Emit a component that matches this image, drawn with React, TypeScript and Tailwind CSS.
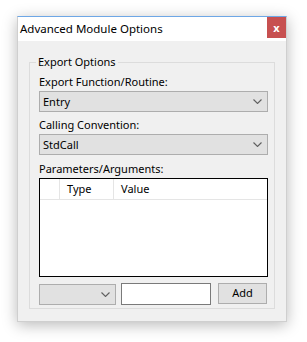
import React from "react";

const font = { fontFamily: '"Noto Sans", "Open Sans", sans-serif' };

function Chevron() {
  return (
    <svg width="9" height="5" viewBox="0 0 9 5" className="shrink-0">
      <path d="M0.5 0.5 L4.5 4.5 L8.5 0.5" fill="none" stroke="#5f5f5f" strokeWidth="1.1" />
    </svg>
  );
}

function Combo({ value, className }: { value: string; className: string }) {
  return (
    <div
      className={`flex items-center justify-between h-[21px] bg-[#e1e1e1] border border-[#adadad] pl-[3px] pr-[5px] text-[11px] text-black ${className}`}
    >
      <span className="leading-none">{value}</span>
      <Chevron />
    </div>
  );
}

export default function App() {
  return (
    <div className="w-[307px] h-[342px] bg-white pt-[16px] pl-[17px]" style={font}>
      <div className="w-[270px] h-[306px] flex flex-col bg-[#f0f0f0] border-t border-t-[#6ea7e6] border-x border-b border-[#cfcfcf] shadow-[0_3px_14px_rgba(0,0,0,0.28)]">
        <div className="h-[24px] bg-white flex items-start justify-between pl-[2px] pr-0">
          <span className="text-[11.5px] leading-[16px] mt-[4px] text-black">Advanced Module Options</span>
          <div className="w-[19px] h-[21px] bg-[#c75050] flex items-center justify-center text-white text-[11px] font-bold leading-none">
            x
          </div>
        </div>
        <div className="flex-1 px-[11px] pt-[21px]">
          <div className="relative w-[246px] h-[247px] border border-[#dcdcdc] pl-[9px] pr-[5px] pt-[11px]">
            <span className="absolute left-[6px] top-[-9px] px-[2px] bg-[#f0f0f0] text-[11px] leading-[16px] text-black">
              Export Options
            </span>
            <div className="text-[11px] leading-[16px] text-black">Export Function/Routine:</div>
            <Combo value="Entry" className="mt-[1px] w-[229px]" />
            <div className="text-[11px] leading-[16px] text-black mt-[5px]">Calling Convention:</div>
            <Combo value="StdCall" className="mt-[1px] w-[229px]" />
            <div className="text-[11px] leading-[16px] text-black mt-[6px]">Parameters/Arguments:</div>
            <div className="mt-[1px] w-[229px] h-[99px] border border-black bg-white flex flex-col">
              <div className="h-[21px] flex border-b border-[#e5e5e5] text-[11px] text-black">
                <div className="w-[20px] border-r border-[#e5e5e5]" />
                <div className="w-[54px] border-r border-[#e5e5e5] pl-[7px] flex items-center">Type</div>
                <div className="flex-1 pl-[7px] flex items-center">Value</div>
              </div>
            </div>
            <div className="mt-[6px] flex items-start">
              <Combo value="" className="mt-[1px] w-[77px]" />
              <div className="ml-[5px] w-[90px] h-[22px] border border-[#7a7a7a] bg-white" />
              <div className="ml-[7px] w-[49px] h-[21px] border border-[#adadad] bg-[#e1e1e1] flex items-center justify-center text-[11px] text-black">
                Add
              </div>
            </div>
          </div>
        </div>
      </div>
    </div>
  );
}
